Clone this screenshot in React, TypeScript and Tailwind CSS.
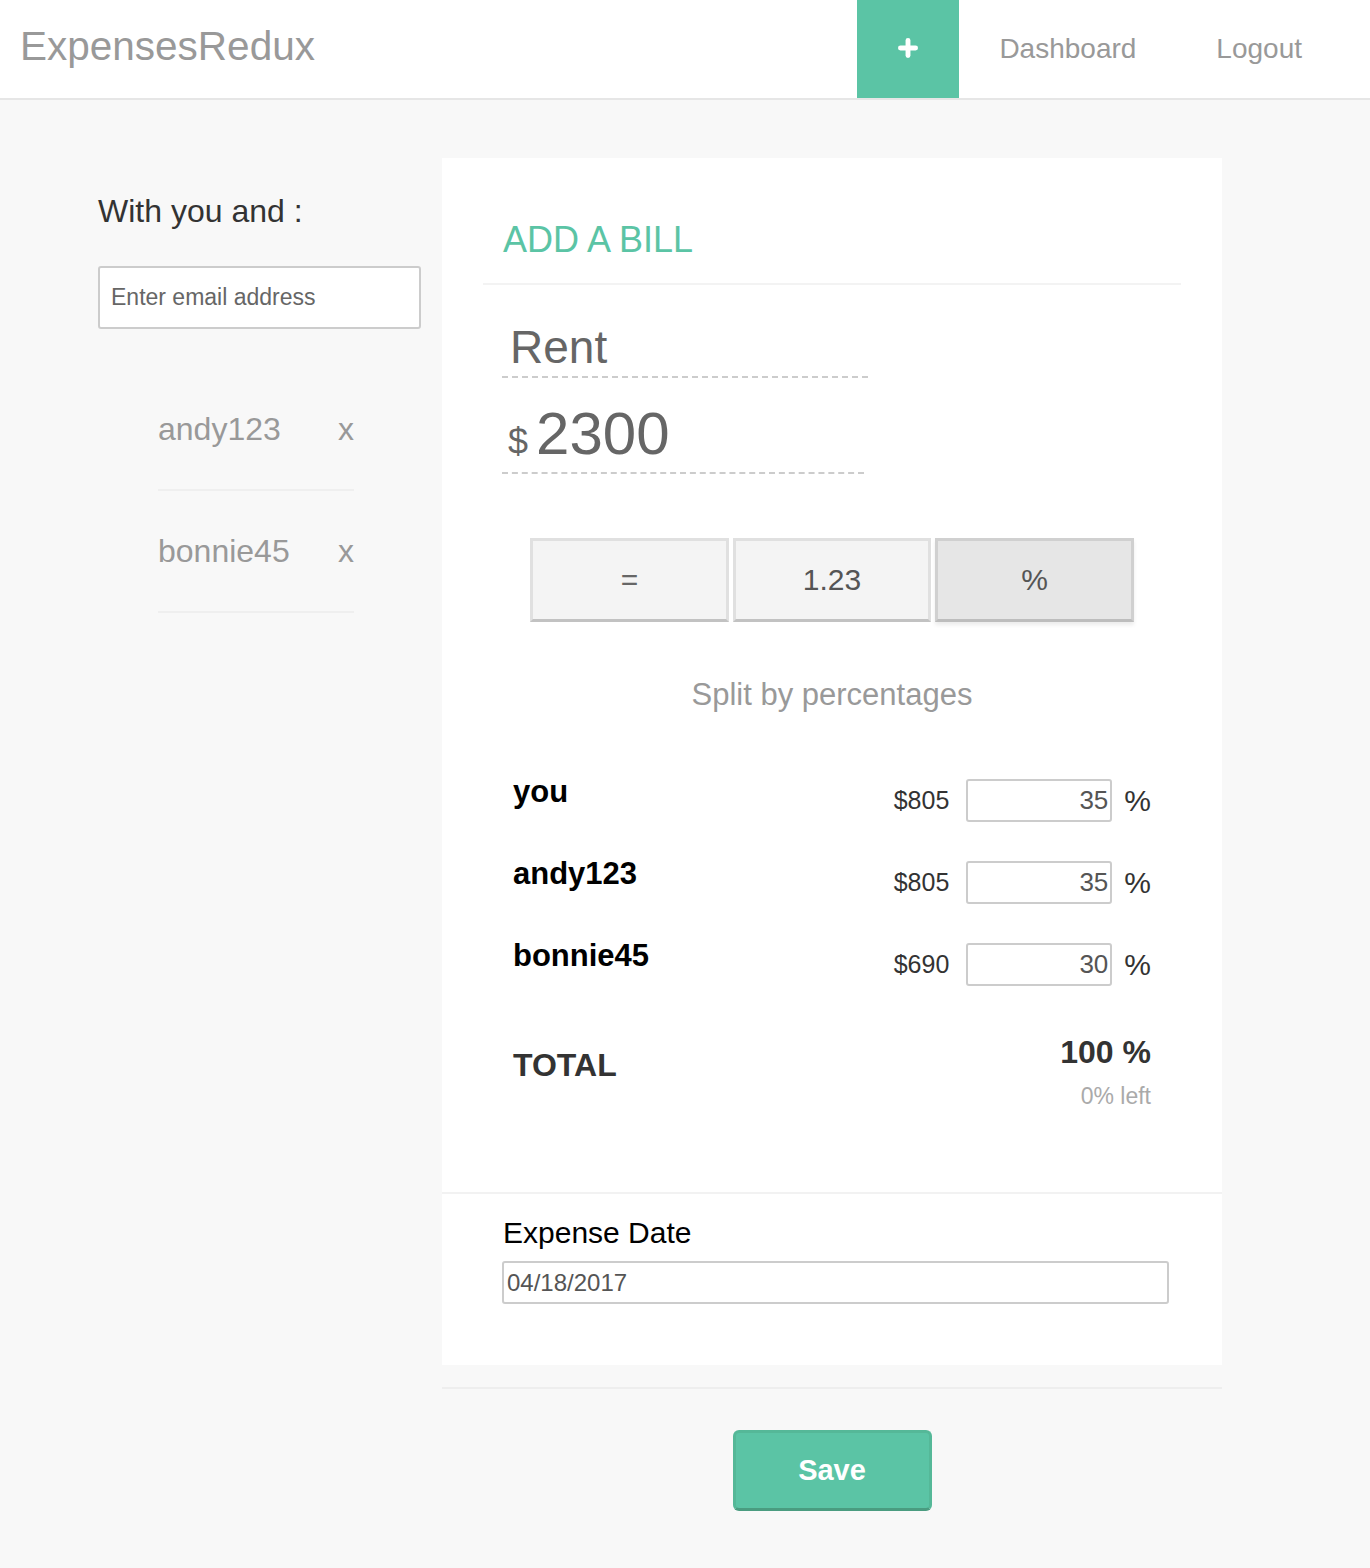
import { Plus } from 'lucide-react';

const people = ['andy123', 'bonnie45'];

const splits = [
  { name: 'you', amount: '$805', pct: '35' },
  { name: 'andy123', amount: '$805', pct: '35' },
  { name: 'bonnie45', amount: '$690', pct: '30' },
];

export default function App() {
  return (
    <div className="min-h-screen bg-[#f8f8f8] font-['Liberation_Sans',Arial,sans-serif]">
      {/* Header */}
      <header className="h-[98px] bg-white shadow-[0_2px_0_#e6e6e6] flex justify-between items-stretch relative z-10">
        <div className="pl-[20px] pb-[6px] flex items-center text-[40.5px] leading-none text-[#999]">
          ExpensesRedux
        </div>
        <nav className="flex items-stretch pr-[28px]">
          <div className="w-[102px] bg-[#5bc4a5] flex items-center justify-center pb-[2px]">
            <Plus className="h-[26px] w-[26px] text-white" strokeWidth={4.5} />
          </div>
          <div className="px-[40px] pb-[1px] flex items-center text-[28px] leading-none text-[#999]">
            Dashboard
          </div>
          <div className="px-[40px] pb-[1px] flex items-center text-[28px] leading-none text-[#999]">
            Logout
          </div>
        </nav>
      </header>

      {/* Main */}
      <main className="flex items-start pl-[98px] pt-[60px]">
        {/* Participants */}
        <div className="w-[323px] pt-[37px]">
          <h2 className="text-[32px] leading-none text-[#333]">With you and :</h2>
          <input
            className="mt-[39px] w-full h-[63px] border-2 border-[#ccc] rounded-[3px] bg-white pl-[11px] text-[23px] text-[#555] placeholder:text-[#666] outline-none"
            placeholder="Enter email address"
          />
          <ul className="mt-[40px] ml-[60px] w-[196px]">
            {people.map((p) => (
              <li
                key={p}
                className="h-[122px] flex items-center justify-between border-b-2 border-[#efefef] text-[32px] leading-none text-[#999]"
              >
                <span>{p}</span>
                <span>x</span>
              </li>
            ))}
          </ul>
        </div>

        {/* Card */}
        <div className="ml-[21px] w-[780px]">
          <div className="bg-white">
            <div className="pb-[84px]">
              <div className="mx-[41px] pl-[20px] pt-[64px] pb-[25px] border-b-2 border-[#f3f3f3]">
                <h1 className="text-[36px] leading-none text-[#5bc4a5]">ADD A BILL</h1>
              </div>

              <div className="ml-[60px] mt-[39px] w-[366px] pl-[8px] pb-[6px] border-b-2 border-dashed border-[#ccc] text-[46px] leading-none text-[#666]">
                Rent
              </div>

              <div className="ml-[60px] mt-[26px] w-[362px] pl-[6px] pb-[8px] border-b-2 border-dashed border-[#ccc] flex items-baseline text-[#666]">
                <span className="text-[36px] leading-none">$</span>
                <span className="ml-[8px] text-[60px] leading-none">2300</span>
              </div>

              <div className="mt-[64px] flex justify-center gap-[4px]">
                <button className="w-[199px] h-[84px] bg-[#f4f4f4] border-[3px] border-[#e0e0e0] border-b-[#c2c2c2] text-[30px] leading-none text-[#666]">
                  =
                </button>
                <button className="w-[198px] h-[84px] bg-[#f4f4f4] border-[3px] border-[#e0e0e0] border-b-[#c2c2c2] text-[30px] leading-none text-[#555]">
                  1.23
                </button>
                <button className="w-[199px] h-[84px] bg-[#e6e6e6] border-[3px] border-[#d0d0d0] border-b-[#bdbdbd] shadow-[0_3px_4px_rgba(0,0,0,0.08)] text-[30px] leading-none text-[#555]">
                  %
                </button>
              </div>

              <p className="mt-[57px] text-center text-[31px] leading-none text-[#999]">
                Split by percentages
              </p>

              <div className="mt-[63px] px-[71px]">
                {splits.map((s) => (
                  <div key={s.name} className="h-[82px] flex items-start justify-between">
                    <span className="mt-[3px] text-[31px] leading-none font-bold text-black">{s.name}</span>
                    <div className="mt-[6px] flex items-center">
                      <span className="text-[25px] text-[#333] mr-[17px]">{s.amount}</span>
                      <input
                        readOnly
                        value={s.pct}
                        className="w-[146px] h-[43px] border-2 border-[#ccc] rounded-[3px] text-right pr-[2px] text-[26px] text-[#555] outline-none"
                      />
                      <span className="ml-[12px] text-[30px] leading-none text-[#333]">%</span>
                    </div>
                  </div>
                ))}

                <div className="mt-[17px] flex items-start justify-between">
                  <span className="mt-[13px] text-[32px] leading-none font-bold text-[#333]">TOTAL</span>
                  <div className="flex flex-col items-end">
                    <span className="text-[32px] leading-none font-bold text-[#333]">100 %</span>
                    <span className="mt-[17px] text-[23px] leading-none text-[#aaa]">0% left</span>
                  </div>
                </div>
              </div>
            </div>

            <div className="border-t-2 border-[#f2f2f2] pl-[61px] pt-[24px] pb-[61px]">
              <label className="block text-[30px] leading-none text-black">Expense Date</label>
              <input
                readOnly
                value="04/18/2017"
                className="mt-[13px] -ml-[1px] w-[667px] h-[43px] border-2 border-[#ccc] rounded-[3px] pl-[3px] text-[24px] text-[#555] outline-none"
              />
            </div>
          </div>

          <div className="mt-[22px] border-t-2 border-[#eee] pt-[41px] pb-[57px] flex justify-center">
            <button className="w-[199px] h-[81px] bg-[#5bc4a5] border-[3px] border-[#55b898] border-b-[#4a9c80] rounded-[6px] text-white text-[29px] font-bold">
              Save
            </button>
          </div>
        </div>
      </main>
    </div>
  );
}
